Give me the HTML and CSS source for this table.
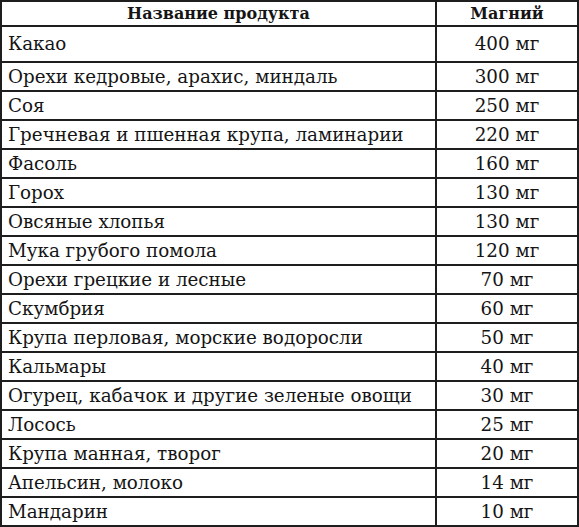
FILE: index.html
```html
<!DOCTYPE html>
<html lang="ru">
<head>
<meta charset="utf-8">
<link rel="stylesheet" href="styles.css">
</head>
<body>
<table class="tbl">
  <thead>
    <tr class="head"><th class="c-name">Название продукта</th><th class="c-val">Магний</th></tr>
  </thead>
  <tbody>
    <tr class="first"><td class="c-name">Какао</td><td class="c-val">400 мг</td></tr>
    <tr><td class="c-name">Орехи кедровые, арахис, миндаль</td><td class="c-val">300 мг</td></tr>
    <tr><td class="c-name">Соя</td><td class="c-val">250 мг</td></tr>
    <tr><td class="c-name">Гречневая и пшенная крупа, ламинарии</td><td class="c-val">220 мг</td></tr>
    <tr><td class="c-name">Фасоль</td><td class="c-val">160 мг</td></tr>
    <tr><td class="c-name">Горох</td><td class="c-val">130 мг</td></tr>
    <tr><td class="c-name">Овсяные хлопья</td><td class="c-val">130 мг</td></tr>
    <tr><td class="c-name">Мука грубого помола</td><td class="c-val">120 мг</td></tr>
    <tr><td class="c-name">Орехи грецкие и лесные</td><td class="c-val">70 мг</td></tr>
    <tr><td class="c-name">Скумбрия</td><td class="c-val">60 мг</td></tr>
    <tr><td class="c-name">Крупа перловая, морские водоросли</td><td class="c-val">50 мг</td></tr>
    <tr><td class="c-name">Кальмары</td><td class="c-val">40 мг</td></tr>
    <tr><td class="c-name">Огурец, кабачок и другие зеленые овощи</td><td class="c-val">30 мг</td></tr>
    <tr><td class="c-name">Лосось</td><td class="c-val">25 мг</td></tr>
    <tr><td class="c-name">Крупа манная, творог</td><td class="c-val">20 мг</td></tr>
    <tr><td class="c-name">Апельсин, молоко</td><td class="c-val">14 мг</td></tr>
    <tr><td class="c-name">Мандарин</td><td class="c-val">10 мг</td></tr>
  </tbody>
</table>
</body>
</html>
```
FILE: styles.css
```css
html, body {
  margin: 0;
  padding: 0;
  background: #ffffff;
}
.tbl {
  border-collapse: separate;
  border-spacing: 0;
  width: 579px;
  table-layout: fixed;
  border-top: 2px solid #1e1e1e;
  border-left: 2px solid #1e1e1e;
  box-sizing: border-box;
  font-family: "DejaVu Serif", "Liberation Serif", serif;
  color: #151515;
}
.tbl th, .tbl td {
  border-right: 2px solid #1e1e1e;
  border-bottom: 2px solid #1e1e1e;
  padding: 1px 6px 0;
  vertical-align: middle;
  white-space: nowrap;
  line-height: 1;
}
.tbl .c-name { width: 435px; box-sizing: border-box; }
.tbl th {
  font-size: 16px;
  font-weight: bold;
  height: 22px;
  text-align: center;
}
.tbl td {
  font-size: 18.3px;
  height: 26px;
}
.tbl tr.first td { height: 33px; }
.tbl td.c-name { text-align: left; }
.tbl td.c-val, .tbl th.c-val { text-align: center; }
```
